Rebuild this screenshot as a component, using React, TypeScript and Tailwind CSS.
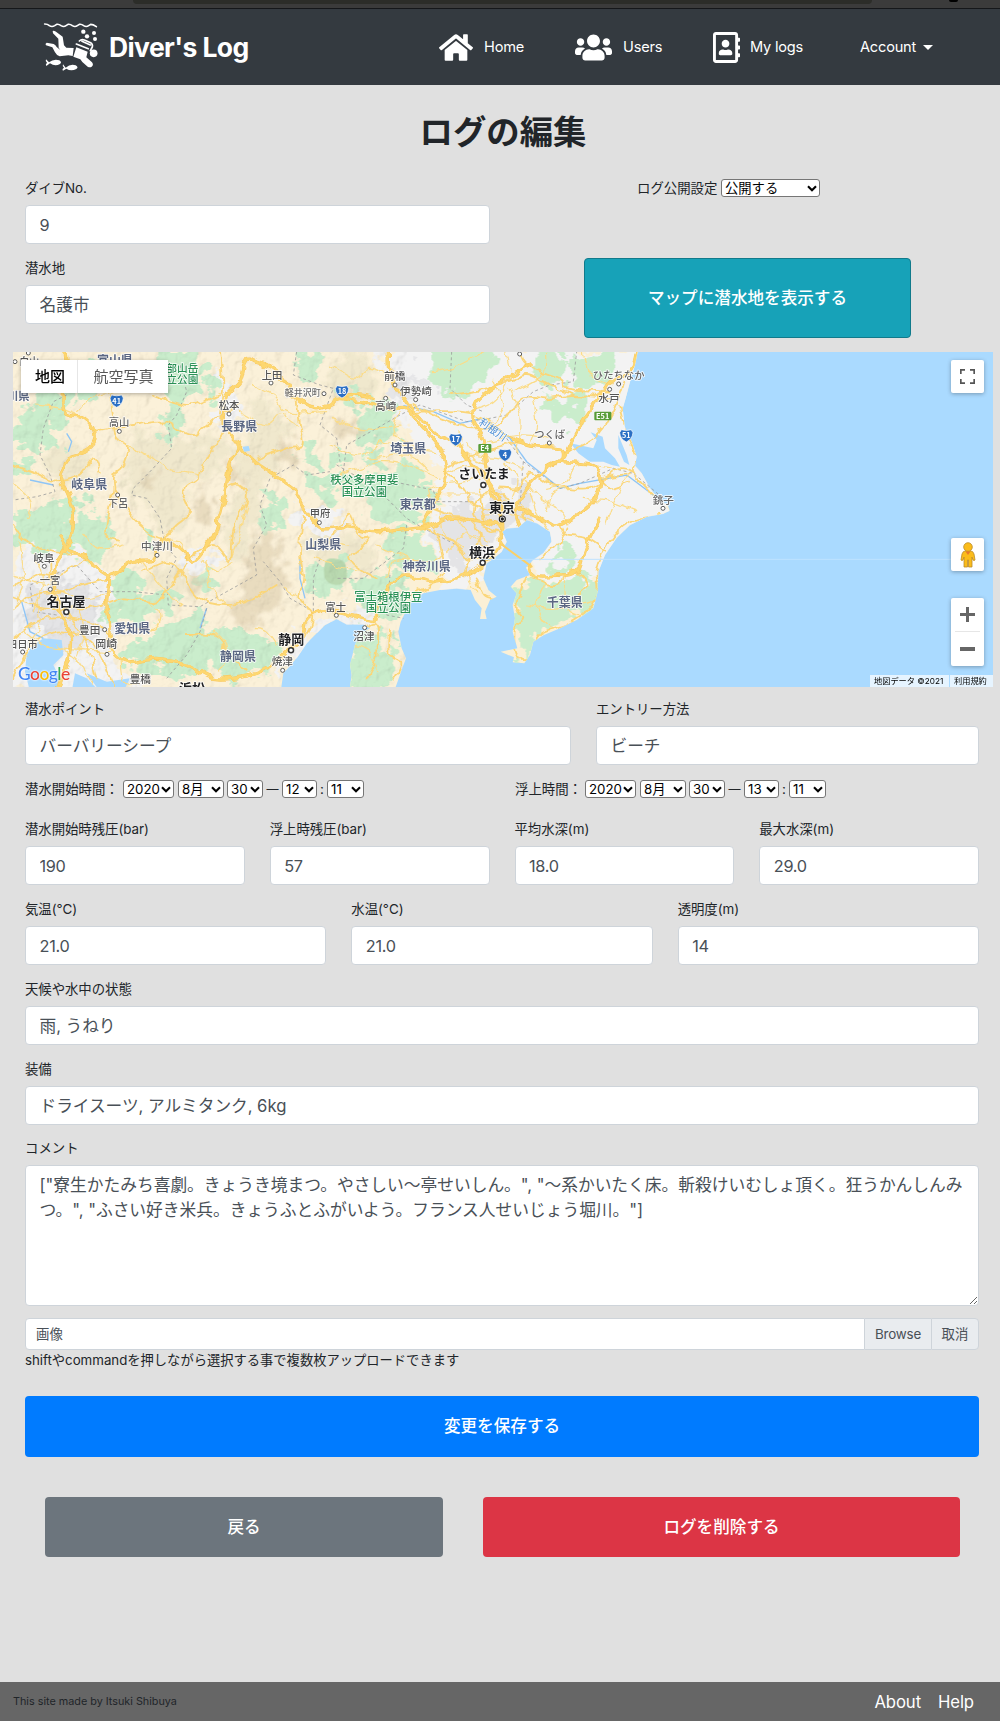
import React from "react";
import { FaHome, FaUsers, FaRegAddressBook } from "react-icons/fa";

type Pt = [number, number];

/* Catmull-Rom spline through a flat list of coordinates */
function curve(s: string, close = false): string {
  const n = s.trim().split(/[\s,]+/).map(Number);
  const p: Pt[] = [];
  for (let i = 0; i + 1 < n.length; i += 2) p.push([n[i], n[i + 1]]);
  const L = p.length;
  const at = (i: number): Pt =>
    close ? p[(i + L) % L] : p[Math.max(0, Math.min(L - 1, i))];
  let d = `M${p[0][0]} ${p[0][1]}`;
  for (let i = 0; i < (close ? L : L - 1); i++) {
    const a = at(i - 1), b = at(i), c = at(i + 1), e = at(i + 2);
    d += `C${b[0] + (c[0] - a[0]) / 6} ${b[1] + (c[1] - a[1]) / 6} ${c[0] - (e[0] - b[0]) / 6} ${c[1] - (e[1] - b[1]) / 6} ${c[0]} ${c[1]}`;
  }
  return close ? d + "Z" : d;
}

const LAND =
  "M-20 0H1917L1905 60L1890 110L1877 160L1868 190L1874 245L1895 290L1910 335L1905 362L1925 385L1950 430L1972 458L2004 482L2009 497L1990 506L1940 515L1890 540L1850 578L1815 630L1795 680L1793 740L1780 790L1730 825L1680 850L1632 870L1600 890L1590 930L1573 955L1538 952L1542 937L1502 920L1552 910L1538 860L1545 820L1538 780L1550 745L1532 725L1550 705L1590 690L1578 668L1600 645L1630 625L1655 590L1650 560L1612 535L1580 525L1555 547L1520 550L1507 560L1520 590L1505 620L1480 642L1460 655L1450 700L1465 735L1490 755L1470 765L1455 800L1460 822L1440 822L1445 790L1425 765L1412 735L1370 730L1320 735L1270 745L1235 770L1217 800L1202 830L1195 860L1205 910L1218 940L1205 975L1182 1040H1048L1055 990L1050 960L1065 900L1080 865L1110 850L1090 838L1040 838L1010 822L975 840L945 870L920 895L893 935L868 965L850 985L842 1040H-20Z";

const PLAINS = [
  "1170 20 1200 100 1180 170 1230 260 1290 330 1340 390 1320 470 1270 530 1300 620 1330 735 1420 740 1480 650 1660 700 1800 720 2010 490 1920 340 1880 160 1920 10",
  "40 650 120 590 200 600 320 690 330 800 350 930 420 1030 30 1040 20 800",
  "890 490 940 470 1040 520 1020 560 920 580",
  "560 640 640 600 650 650 580 690 550 670",
  "650 70 690 100 710 200 690 260 650 200",
  "840 900 900 870 930 850 1010 800 1100 810 1110 850 1010 830 930 890 870 960 840 1000",
];

const GREENS = [
  "120 150 190 120 200 200 150 260 160 300 90 320 40 280 50 230",
  "230 90 300 40 330 90 290 150 240 190",
  "480 40 600 20 590 120 550 160 560 200 540 240 500 290 460 240 520 200 500 140",
  "880 20 950 20 970 70 930 110 900 90",
  "200 460 240 510 320 520 340 590 290 640 240 620 180 610 100 640 40 570 50 500 110 480",
  "330 730 380 680 430 700 420 740 500 750 520 790 480 810 400 820 330 840",
  "380 920 430 890 500 840 590 790 620 840 740 850 820 880 800 980 720 1000 620 970 540 1000 440 970",
  "780 480 820 450 850 530 810 560 790 540",
  "940 650 1020 630 1040 700 1010 760 950 750 930 690",
  "990 390 1060 400 1200 410 1310 440 1290 490 1200 520 1120 500 1080 450 1020 440",
  "1150 150 1200 200 1190 260 1140 300 1090 270 1100 190",
  "1300 30 1400 20 1490 30 1450 110 1350 160 1310 110",
  "1650 160 1730 150 1740 210 1690 250 1650 230",
  "1590 30 1640 20 1690 60 1680 110 1620 100",
  "1700 20 1850 20 1830 110 1760 130 1710 90",
  "1150 580 1220 550 1290 610 1270 680 1200 690 1160 660",
  "1060 700 1150 700 1230 740 1180 810 1090 820 1070 760",
  "1060 880 1110 850 1160 900 1195 880 1200 960 1180 1025 1060 1025",
  "1560 730 1620 700 1700 710 1790 700 1790 780 1720 820 1630 860 1600 930 1550 950 1580 900 1545 860",
  "1670 640 1710 610 1730 640 1690 670",
  "600 710 640 680 650 740 610 760", "430 540 470 560 460 600 430 590", "940 400 990 390 1000 440 960 470",
  "60 350 90 360 80 400 50 390", "620 80 660 90 650 140 610 130", "1000 310 1060 330 1050 370 1000 360",
  "1100 320 1160 330 1140 370 1100 360", "1170 400 1230 350 1280 400 1250 440", "1040 130 1090 140 1080 180 1040 170",
  "260 450 300 470 290 500 250 490", "900 330 940 300 950 340 920 360",
];

const HILLS = [
  "690 800 730 720 750 620 790 550 820 570 840 650 860 740 800 800 740 850",
  "600 430 625 450 635 520 615 560 595 510",
  "835 290 855 280 878 320 865 360 850 350",
  "430 410 450 380 475 380 470 400 440 425",
  "560 720 600 700 590 740 560 750",
  "1000 240 1050 220 1100 250 1070 280 1010 270",
  "690 370 710 350 720 400 700 420",
];
const DUNES = [
  "380 300 450 260 560 290 640 270 700 320 640 390 560 420 560 480 520 570 440 480 380 440",
  "700 320 820 300 860 330 800 420 790 500 760 560 740 640 680 640 680 500 730 430",
  "500 660 610 700 600 760 520 760 440 720",
  "200 290 260 330 280 400 200 410 120 360",
  "750 160 830 190 880 250 800 320 740 270",
  "1000 50 1100 30 1130 130 1060 180 990 160",
  "920 590 950 560 1030 570 1100 600 1130 640 1090 680 960 650",
];

const MAJOR = [
  "195 20 200 80 190 140 195 205 250 220 280 260 275 300 240 325 200 345 182 400 205 450 220 510 215 570 200 610 170 660 160 720 180 800 210 870 205 940 175 1030",
  "180 570 200 610 250 630 290 670 325 700 320 770 330 850 330 910 380 950 470 940 560 960 640 1000 730 995 800 970 860 920 910 880 920 830 960 800 1010 800 1070 815 1125 825 1130 790 1190 700 1260 700 1320 710 1400 690 1460 650 1500 600",
  "320 700 400 650 460 640 490 580 560 630 590 645 640 570 660 500 680 420 690 360 715 305 690 270 670 240 680 150 720 110 740 40 770 50 830 80 880 150 940 190 990 180 1015 160 1120 180 1180 190 1220 190 1260 240 1320 310 1340 380 1320 440 1270 540",
  "720 305 760 345 820 390 880 430 920 500 965 550 1040 545 1120 560 1200 555 1280 545 1350 520 1450 530 1500 540",
  "1165 20 1170 90 1220 170 1300 260 1360 290 1410 350 1460 400 1500 470 1505 540 1510 600 1580 650 1600 690 1680 690 1730 680 1760 600 1800 520",
  "1590 60 1490 120 1430 170 1420 220 1450 290 1460 360 1470 430 1500 500",
  "1910 20 1890 80 1830 110 1790 170 1730 260 1690 340 1640 370 1580 430 1550 500 1560 540",
  "1690 350 1780 360 1800 410 1770 480 1680 540 1640 530 1560 490",
  "1530 280 1590 300 1680 310 1690 340",
  "1120 160 1080 150 1020 160 990 185",
];
const MEDIUM = [
  "330 150 350 270 380 300 370 360 340 390 340 440 325 500 320 570 360 590",
  "280 260 400 240 500 230 580 270 660 210 720 180",
  "670 260 620 340 590 400 550 430 570 500 530 540 480 580 420 540 370 480 345 440",
  "40 360 110 385 160 410 240 390 280 340 300 380",
  "40 540 80 590 160 620 260 630",
  "40 730 110 690 170 690 260 640",
  "40 800 90 750 180 740 240 720 320 700",
  "40 880 110 830 200 820 290 840 340 880",
  "40 1000 90 910 170 860 260 880 300 930 340 1020",
  "150 650 160 740 200 800 260 900 290 1000",
  "40 760 130 790 210 790 300 780 370 760 470 770 500 740 560 650",
  "560 640 640 600 690 650 700 560 740 460 720 420 680 430",
  "560 870 640 870 690 930 740 980",
  "430 680 500 650 540 680 600 760 680 780 760 760 830 720",
  "910 510 900 620 910 700 900 760 940 810 920 880",
  "890 170 900 240 910 300 860 310 770 340",
  "820 90 860 120 870 150",
  "660 20 670 120 660 200",
  "460 150 520 170 580 180 660 150",
  "980 590 1030 530 1050 500 1070 560 1100 590 1050 640 1090 680 1130 700",
  "1240 180 1320 220 1420 250 1500 240 1560 160 1640 160 1720 150 1830 160",
  "1350 150 1470 130 1580 90 1640 120 1740 150",
  "1240 200 1380 200 1450 220 1530 280",
  "1340 370 1400 340 1480 310 1560 290",
  "1340 380 1390 430 1420 480 1500 500",
  "1270 480 1350 510 1400 520 1440 570 1410 640 1390 700",
  "1500 430 1560 430 1590 380 1660 420 1760 430 1820 400 1890 390",
  "1440 430 1460 550 1490 560",
  "1300 550 1320 600 1330 660 1310 710 1230 750",
  "1270 550 1360 590 1400 640 1450 640",
  "1550 500 1490 440 1430 470 1430 520 1500 560 1570 560 1570 490",
  "1430 700 1450 750 1480 760",
  "1580 690 1550 780 1570 820 1545 850 1550 930 1590 940 1620 870 1700 840 1770 790 1795 730 1790 680 1820 600 1890 530 1980 510",
  "1680 540 1700 570 1760 580 1820 620",
  "1700 550 1670 600 1620 640",
  "1600 700 1660 720 1720 680 1760 720 1720 760",
  "1860 180 1880 260 1910 340 1900 380 1960 450",
  "1700 320 1780 280 1840 200 1870 110",
  "1820 400 1860 370 1900 380",
  "1170 850 1170 930 1205 960 1180 1010",
  "1090 850 1130 840 1130 930 1100 1000",
  "1800 410 1830 430 1890 410",
  "1560 20 1580 60 1680 100 1700 130 1830 140",
];
const MINOR = [
  "40 420 90 470 80 520", "100 620 130 700 100 800", "60 590 70 700 50 780", "250 560 300 610 370 600",
  "420 640 480 720 540 780", "620 650 640 740 700 790", "490 580 540 590 550 630", "610 650 650 680 700 650",
  "420 760 480 800 460 850 350 840", "640 860 680 910 660 980", "760 850 800 860 830 900", "850 730 900 760 920 790",
  "720 200 800 240 840 210 890 240", "760 120 820 150 860 200 980 200", "990 60 1060 100 1110 70 1160 90",
  "990 300 1080 330 1150 290 1240 310 1310 320", "1000 390 1080 370 1140 350 1220 360 1320 400",
  "1200 200 1180 260 1240 300", "1300 80 1380 60 1450 20", "1400 200 1480 170 1530 100 1520 20",
  "1640 20 1630 90 1540 140", "1750 20 1770 90 1830 120", "1600 160 1610 240 1590 300", "1460 290 1560 270 1650 280",
  "1640 430 1700 410 1730 360 1840 370", "1640 500 1660 440 1710 430", "1750 460 1830 470 1910 500", "1820 540 1860 430 1890 380",
  "1590 440 1610 500 1650 560", "1480 100 1510 180 1470 250", "1530 130 1560 220 1550 320", "1380 260 1390 320 1460 360",
  "1300 480 1290 430 1380 410 1440 400", "1340 620 1370 590 1400 560", "1410 570 1450 600 1500 610", "1450 660 1410 690 1430 740",
  "1630 720 1610 790 1650 850", "1690 710 1700 790 1740 810", "1580 780 1660 790 1780 770", "1130 600 1200 630 1280 650 1330 630",
  "1160 700 1180 650 1260 640", "1080 680 1000 660 940 640", "930 610 980 590 1040 600", "1060 900 1110 920 1130 980",
  "170 900 230 940 280 1020", "360 940 370 1010 420 1020", "230 200 270 160 340 140", "110 180 180 190 230 210",
  "40 690 140 720 240 760 320 740", "70 860 130 900 200 910 330 920", "240 790 250 860 230 930", "110 760 120 830 90 900",
  "380 300 440 330 500 370 550 380 600 390", "690 650 720 570 740 480", "1200 240 1150 250 1080 250 1000 220",
  "1290 380 1260 350 1220 330 1100 340", "1330 400 1370 370 1420 360", "1400 290 1430 330 1500 340 1570 370",
  "1340 450 1420 450 1500 450", "1320 490 1330 560 1390 610", "1370 520 1400 560 1470 590", "1470 480 1540 470 1590 500",
  "1450 510 1540 510 1600 530", "1510 350 1550 400 1540 460", "1570 400 1620 460 1690 500 1700 540",
];
const BORDERS =
  "M200 150L160 170L130 250L120 330L150 390L165 440L110 455L40 465M540 60L560 140L530 210L505 240L515 310L450 380L400 430L395 450L440 460L480 520L495 600L530 640L500 700L505 780L600 785L680 740L770 690L760 610L800 540L780 480L810 400L880 360L920 390L990 380M170 810L100 800L90 720L160 690L230 660L300 740L400 740L500 750M620 790L600 860L560 930L500 1000M1355 20L1350 130L1400 180L1450 200M1030 380L1040 300L1130 250L1200 210L1260 180L1400 230L1470 220L1520 210L1600 140L1650 120L1720 110L1730 20M1520 280L1570 350L1680 430L1740 415L1840 370L1900 385L1990 460M1010 360L1080 400L1180 410L1300 435L1310 470L1420 470M1150 450L1220 520L1270 550L1370 600M1220 540L1210 610L1130 670L1090 700L1010 700M1170 690L1160 810L1210 820M960 640L940 700L940 800L870 760L840 710L790 650M890 20L880 90L960 120L1000 130L960 240L1010 280L1020 350M1570 350L1560 480L1580 530";

const LABELS: [string, number, number, number, string, number][] = [
  ["白山", 88, 60, 30, "#555", 500], ["富山県", 345, 60, 36, "#5b6783", 700], ["石川県", 38, 166, 34, "#5b6783", 700],
  ["中部山岳", 531, 81, 32, "#2a9156", 500], ["国立公園", 531, 113, 32, "#2a9156", 500],
  ["上田", 816, 101, 31, "#555", 500], ["軽井沢町", 908, 154, 27, "#6d6d6d", 500], ["松本", 687, 193, 31, "#555", 500],
  ["長野県", 718, 257, 36, "#5b6783", 700], ["高山", 357, 243, 31, "#666", 500], ["岐阜県", 268, 432, 36, "#5b6783", 700],
  ["下呂", 354, 486, 31, "#666", 500], ["中津川", 471, 615, 32, "#666", 500], ["甲府", 960, 517, 31, "#555", 500],
  ["山梨県", 970, 611, 36, "#5b6783", 700], ["岐阜", 132, 650, 32, "#555", 500], ["一宮", 150, 718, 31, "#555", 500],
  ["名古屋", 198, 783, 39, "#202124", 700], ["豊田", 269, 866, 32, "#555", 500], ["愛知県", 397, 865, 36, "#5b6783", 700],
  ["四日市", 67, 908, 31, "#555", 500], ["岡崎", 319, 910, 33, "#555", 500], ["静岡", 874, 898, 39, "#202124", 700],
  ["静岡県", 714, 948, 36, "#5b6783", 700], ["焼津", 847, 961, 32, "#555", 500], ["豊橋", 421, 1014, 32, "#555", 500],
  ["浜松", 576, 1044, 39, "#202124", 700], ["富士", 1007, 799, 31, "#555", 500], ["沼津", 1092, 886, 32, "#555", 500],
  ["前橋", 1184, 106, 32, "#555", 500], ["伊勢崎", 1248, 151, 32, "#555", 500], ["高崎", 1157, 196, 32, "#555", 500],
  ["埼玉県", 1225, 325, 36, "#5b6783", 700], ["秩父多摩甲斐", 1093, 418, 34, "#2a9156", 500], ["国立公園", 1093, 453, 34, "#2a9156", 500],
  ["さいたま", 1452, 400, 39, "#202124", 700], ["東京都", 1253, 492, 36, "#5b6783", 700], ["東京", 1506, 501, 39, "#202124", 700],
  ["横浜", 1446, 635, 39, "#202124", 700], ["神奈川県", 1280, 679, 36, "#5b6783", 700], ["富士箱根伊豆", 1165, 767, 34, "#2a9156", 500],
  ["国立公園", 1165, 802, 34, "#2a9156", 500], ["つくば", 1649, 278, 31, "#666", 500], ["ひたちなか", 1856, 103, 31, "#666", 500],
  ["水戸", 1827, 170, 32, "#555", 500], ["銚子", 1990, 476, 32, "#666", 500], ["千葉県", 1694, 787, 36, "#5b6783", 700],
];
const DOTS: Pt[] = [
  [45, 50], [85, 24], [813, 114], [972, 146], [687, 207], [358, 259], [353, 450], [471, 631], [958, 533], [133, 664], [151, 733],
  [314, 854], [68, 921], [321, 928], [848, 976], [1009, 811], [1094, 848], [1185, 120], [1247, 164], [1157, 160], [1648, 294],
  [1856, 117], [1829, 133], [1989, 490], [1559, 27],
];
const BIG_DOTS: Pt[] = [[199, 801], [873, 916], [1450, 420], [1448, 653]];
const SHIELDS: [string, number, number][] = [["41", 350, 167], ["18", 1026, 139], ["17", 1367, 283], ["4", 1515, 329], ["51", 1879, 271]];

function MapDrawing() {
  return (
    <svg viewBox="0 0 980 335" className="block h-full w-full font-['Noto_Sans_CJK_JP',sans-serif]" aria-hidden="true">
      <defs>
        <clipPath id="land"><path d={LAND} /></clipPath>
        <filter id="ragged" filterUnits="userSpaceOnUse" x="-20" y="0" width="2100" height="1050">
          <feTurbulence type="fractalNoise" baseFrequency="0.018" numOctaves="4" seed="3" />
          <feDisplacementMap in="SourceGraphic" scale="130" xChannelSelector="R" yChannelSelector="G" />
        </filter>
        <filter id="soft" filterUnits="userSpaceOnUse" x="-20" y="0" width="2100" height="1050">
          <feTurbulence type="fractalNoise" baseFrequency="0.03" numOctaves="3" seed="5" />
          <feDisplacementMap in="SourceGraphic" scale="110" xChannelSelector="R" yChannelSelector="G" />
          <feGaussianBlur stdDeviation="5" />
        </filter>
        <filter id="wobble" filterUnits="userSpaceOnUse" x="-20" y="0" width="2100" height="1050">
          <feTurbulence type="fractalNoise" baseFrequency="0.03" numOctaves="2" seed="11" />
          <feDisplacementMap in="SourceGraphic" scale="26" xChannelSelector="R" yChannelSelector="G" />
        </filter>
        <filter id="relief" x="0" y="0" width="100%" height="100%">
          <feTurbulence type="fractalNoise" baseFrequency="0.03 0.022" numOctaves="4" seed="8" />
          <feDiffuseLighting surfaceScale="26" lightingColor="#fff" diffuseConstant="1.15">
            <feDistantLight azimuth="225" elevation="60" />
          </feDiffuseLighting>
          <feGaussianBlur stdDeviation="0.6" />
        </filter>
      </defs>
      <rect width="980" height="335" fill="#aadaff" />
      <g transform="translate(-13 -7) scale(.33333)">
        <path d={LAND} fill="#fbf0d6" />
        <g clipPath="url(#land)">
          <g filter="url(#soft)">{DUNES.map((d) => <path key={d} d={curve(d, true)} fill="#f0e8cd" />)}</g>
          <g filter="url(#ragged)">
            {PLAINS.map((d) => <path key={d} d={curve(d, true)} fill="#f3f3f3" />)}
            <path d={curve("1440 470 1520 430 1570 470 1570 530 1500 560 1430 640 1380 700 1340 640 1310 560 1350 500", true)} fill="#e4e4e6" />
            <path d={curve("100 740 200 710 290 760 280 880 200 910 110 860", true)} fill="#e4e4e6" />
            <path d={curve("1250 80 1300 100 1310 150 1200 160 1180 110", true)} fill="#e6e6e8" />
            {GREENS.map((d) => <path key={d} d={curve(d, true)} fill="#caedcc" />)}
          </g>
          <g filter="url(#soft)">{HILLS.map((d) => <path key={d} d={curve(d, true)} fill="#dccdad" opacity=".6" />)}</g>
          <path d={curve("980 645 1030 650 1040 700 1010 720 975 700", true)} fill="#b9d9b0" />
          <rect x="-10" y="0" width="1230" height="1040" filter="url(#relief)" opacity=".08" className="mix-blend-multiply" />
        </g>
        <g fill="#aadaff">
          <path d="M80 930L95 905L130 880L185 885L190 930L160 960L180 1000L165 1040H90L75 980ZM215 1040L225 985L260 1000L300 1040ZM260 985L320 1010L390 1000L370 1040H300Z" />
          <path d="M1712 295L1780 310L1790 285L1772 262L1808 275L1815 310L1845 340L1860 365L1835 360L1810 350L1770 350L1735 325ZM1855 270L1880 330L1888 360L1872 350L1855 310ZM728 305l18 -2 4 14 -18 3Z" />
        </g>
        <g fill="none" stroke="#8ec5f6" strokeWidth="4">
          <path d="M1210 182L1300 200L1380 235L1450 220L1530 280L1580 350L1680 430L1740 415L1880 390L1980 465M200 265L215 290L205 320M65 770L90 860L130 880M900 640V700L915 760M600 850L620 790M90 405L160 420" />
        </g>
        <g fill="none" strokeLinejoin="round" strokeLinecap="round">
          <path d={BORDERS} stroke="#9a9a9a" strokeWidth="3" strokeDasharray="9 8" strokeLinecap="butt" opacity=".8" />
          <g clipPath="url(#land)">
            <g filter="url(#wobble)">
              {MINOR.map((d) => <path key={d} d={curve(d)} stroke="#fbdc88" strokeWidth="3.6" />)}
              {MEDIUM.map((d) => <path key={d} d={curve(d)} stroke="#fbd678" strokeWidth="5.4" />)}
              {MAJOR.map((d) => <path key={d} d={curve(d)} stroke="#f7c65c" strokeWidth="10" />)}
              {MAJOR.map((d) => <path key={d} d={curve(d)} stroke="#fdd770" strokeWidth="7.5" />)}
            </g>
          </g>
          <path d="M1507 600L1595 665" stroke="#fbd067" strokeWidth="6" />
        </g>
        <path d="M1440 643H2960" stroke="#bfe2ff" strokeWidth="3" />
        {DOTS.map(([x, y]) => <circle key={`${x}-${y}`} cx={x} cy={y} r="6" fill="#fff" stroke="#5b5b5b" strokeWidth="3" />)}
        {BIG_DOTS.map(([x, y]) => <circle key={`${x}-${y}`} cx={x} cy={y} r="7.5" fill="#fff" stroke="#333" strokeWidth="4.5" />)}
        <circle cx="1507" cy="522" r="9" fill="#fff" stroke="#222" strokeWidth="3.5" />
        <circle cx="1507" cy="522" r="5" fill="#222" />
        {LABELS.map(([t, x, y, size, fill, weight]) => (
          <text key={`${t}${x}${y}`} x={x} y={y} fontSize={size} fill={fill} fontWeight={weight} textAnchor="middle" stroke="#fff" strokeWidth="5" strokeOpacity=".85" strokeLinejoin="round" paintOrder="stroke">{t}</text>
        ))}
        <text transform="translate(1472 263) rotate(35)" fontSize="31" fill="#4b8ed6" textAnchor="middle" stroke="#fff" strokeWidth="4" strokeOpacity=".7" paintOrder="stroke">利根川</text>
        {SHIELDS.map(([t, x, y]) => (
          <g key={t} transform={`translate(${x} ${y})`}>
            <path d="M-15 -17Q0 -12 15 -17Q17 -12 20 -8Q18 12 0 20Q-18 12 -20 -8Q-17 -12 -15 -17Z" fill="#2b6fc4" stroke="#fff" strokeWidth="2" />
            <text y="9" fontSize="22" fontWeight="700" fill="#fff" textAnchor="middle">{t}</text>
          </g>
        ))}
        <rect x="1435" y="297" width="39" height="26" rx="3" fill="#579c37" />
        <text x="1454" y="318" fontSize="22" fontWeight="700" fill="#fff" textAnchor="middle">E4</text>
        <rect x="1783" y="200" width="51" height="26" rx="3" fill="#579c37" />
        <text x="1808" y="221" fontSize="22" fontWeight="700" fill="#fff" textAnchor="middle">E51</text>
      </g>
    </svg>
  );
}

function DiverLogo() {
  return (
    <svg viewBox="128 66 168 150" className="h-[50px] w-[56px]" fill="none" stroke="#fff" strokeLinecap="round" strokeLinejoin="round" aria-hidden="true">
      <path d="M133 72Q142 72 147 77Q155 82 163 77L169 73Q176 72 182 77Q190 82 197 77L203 73Q210 72 216 77Q224 82 231 77L237 73Q244 72 250 77Q258 82 265 77L271 73Q278 73 288 80" strokeWidth="5" />
      <g fill="#fff" stroke="none">
        <circle cx="249" cy="95" r="6.5" /><circle cx="281" cy="99" r="6" /><circle cx="260" cy="109" r="6.5" /><circle cx="284" cy="117" r="6" />
        <circle cx="280" cy="160" r="11.5" />
        <path d="M157 93Q163 91 169 97L187 110L191 136L198 143L220 144L217 168L204 166L178 169Q170 168 164 157L156 142L137 136Q133 131 139 128L160 132Q166 135 169 141L180 150L175 143L174 116L158 100Z" />
        <path d="M228 142L262 155L258 172L275 187Q281 195 274 200Q269 203 262 200L246 186L240 178L219 170Z" />
        <path d="M146 187Q160 176 177 181Q186 187 179 192Q164 200 149 190L138 198Q134 193 140 188Q134 183 137 178Z" />
        <path d="M196 203Q210 191 226 196Q236 202 228 207Q212 215 198 206L188 212Q184 208 191 203Q185 198 188 193Z" />
      </g>
      <path d="M228 132L264 146M237 123Q243 117 252 120L271 128Q278 132 276 141L270 152M245 124L270 135" strokeWidth="5" />
    </svg>
  );
}

function Select({ value, className }: { value: string; className: string }) {
  return (
    <span className={`relative inline-flex h-[18px] shrink-0 ${className}`}>
      <select className="h-full w-full appearance-none rounded-[3px] border border-[#767676] bg-white pl-[3px] text-[13.3px] leading-[15px] text-black">
        <option>{value}</option>
      </select>
      <svg viewBox="0 0 10 7" className="pointer-events-none absolute top-[5.5px] right-[3px] h-[7px] w-[10px]" fill="none" stroke="#000" strokeWidth="2.1">
        <path d="M1 1.2L5 5.2L9 1.2" />
      </svg>
    </span>
  );
}

function Field({ label, value, className = "" }: { label: string; value: string; className?: string }) {
  const numeric = /^[\d.]+$/.test(value);
  return (
    <div className={className}>
      <label className="block h-5 text-[13.4px] leading-5 tracking-[-0.05px]">{label}</label>
      <input
        defaultValue={value}
        className={`mt-[7px] block h-[39px] w-full rounded-[4px] border border-[#ced4da] bg-white px-[13.5px] text-[#495057] ${numeric ? "pt-px text-[16.3px] tracking-[-0.3px]" : "pb-[2px] text-[16.7px] tracking-[-0.04px]"}`}
      />
    </div>
  );
}

function TimePicker({ label, hour, first }: { label: string; hour: string; first?: boolean }) {
  return (
    <div className="flex h-[18px] items-center text-[13.4px]">
      <span className={first ? "w-[98px]" : "w-[70px]"}>{label}</span>
      <Select value="2020" className="w-[51px]" />
      <Select value="8月" className="ml-1 w-[46px]" />
      <Select value="30" className="ml-[3px] w-[36px]" />
      <span className="w-[19px] text-center text-[12px]">—</span>
      <Select value={hour} className="w-[35px]" />
      <span className="w-[10px] text-center">:</span>
      <Select value="11" className="w-[37px]" />
    </div>
  );
}

const navText = "text-[14.6px] leading-none tracking-[-0.2px]";
const mapButton = "absolute right-[9px] flex w-[33px] flex-col items-center rounded-[2px] bg-white shadow-[0_1px_4px_rgba(0,0,0,0.3)]";

export default function App() {
  return (
    <div className="flex h-[1721px] w-[1000px] flex-col overflow-hidden bg-[#e0e0e0] font-['Inter','Noto_Sans_CJK_JP',sans-serif] text-[#212529]">
      <div className="flex h-[9px] shrink-0 items-start border-b border-[#15171a] bg-[#3b3b3b]">
        <div className="ml-[133px] h-1 w-[739px] rounded-b-[6px] bg-[#2c2d29]" />
        <div className="ml-[77px] h-[2px] w-[9px] rounded-b-full bg-black" />
      </div>

      <header className="flex h-[76px] shrink-0 items-center bg-[#343a40] text-white">
        <div className="ml-[43px] flex items-center">
          <DiverLogo />
          <span className="ml-[10px] w-[330px] text-[26.5px] leading-[36px] font-bold tracking-[-0.6px]">Diver's Log</span>
        </div>
        <nav className="flex items-center pt-px">
          <a className="flex w-[136px] items-center"><FaHome className="h-[31px] w-[34px]" /><span className={`ml-[11px] ${navText}`}>Home</span></a>
          <a className="flex w-[138px] items-center"><FaUsers className="h-[37px] w-[37px]" /><span className={`ml-[11px] ${navText}`}>Users</span></a>
          <a className="flex w-[147px] items-center"><FaRegAddressBook className="h-[31px] w-[27px]" /><span className={`ml-[10px] ${navText}`}>My logs</span></a>
          <a className="flex items-center"><span className={navText}>Account</span><span className="ml-[7px] border-x-[5px] border-t-[5px] border-x-transparent border-t-white" /></a>
        </nav>
      </header>

      <h1 className="mt-[25px] h-[44px] shrink-0 pl-[6px] text-center text-[33.4px] leading-[44px] font-bold">ログの編集</h1>

      <form className="flex h-[1528px] shrink-0 flex-col">
        <div className="mt-[24px] flex h-[174px] shrink-0 pl-[25px]">
          <div className="w-[465px]">
            <Field label="ダイブNo." value="9" />
            <Field label="潜水地" value="名護市" className="mt-[14px]" />
          </div>
          <div className="ml-[94px] w-[327px]">
            <div className="ml-[53px] flex h-5 items-center">
              <span className="w-[84px] text-[13.4px]">ログ公開設定</span>
              <Select value="公開する" className="w-[99px]" />
            </div>
            <button type="button" className="mt-[60px] block h-[80px] w-full rounded-[4px] border border-[#117a8b] bg-[#17a2b8] text-[16.6px] font-medium text-white">マップに潜水地を表示する</button>
          </div>
        </div>

        <div className="relative ml-[13px] h-[335px] w-[980px] shrink-0 overflow-hidden">
          <MapDrawing />
          <div className="absolute top-[8px] left-[8px] flex h-[33px] w-[147px] items-center bg-white text-center text-[15px] shadow-[0_1px_4px_rgba(0,0,0,0.3)]">
            <span className="w-[57px] border-r border-[#e6e6e6] pl-[2px] leading-[33px] font-medium text-black">地図</span>
            <span className="flex-1 pl-px leading-[33px] text-[#565656]">航空写真</span>
          </div>
          <div className={`${mapButton} top-[8px] h-[33px] justify-center`}>
            <svg viewBox="0 0 18 18" className="h-[15px] w-[15px]" fill="#555"><path d="M0 0v6h2V2h4V0H0zm16 0h-4v2h4v4h2V0h-2zm0 16h-4v2h6v-6h-2v4zM2 12H0v6h6v-2H2v-4z" /></svg>
          </div>
          <div className={`${mapButton} top-[186px] h-[33px] justify-center`}>
            <svg viewBox="0 0 16 26" className="h-[26px] w-[16px]" fill="#fbbc1a" stroke="#b98b2c" strokeWidth=".8">
              <path d="M5 9h6q2 0 3 3l1 6q-1 1-2 0l-1-3v10H8.500v-7h-1v7H4V15l-1 3q-1 1-2 0l1-6q1-3 3-3Z" />
              <circle cx="8" cy="5" r="4.300" /><path d="M5.500 9.500h5L8 13Z" fill="#e8762d" stroke="none" />
            </svg>
          </div>
          <div className={`${mapButton} top-[246px] h-[68px]`}>
            <svg viewBox="0 0 15 15" className="mt-[9px] h-[15px] w-[15px]" fill="#666"><path d="M6 0h3v6h6v3H9v6H6V9H0V6h6Z" /></svg>
            <span className="mt-[9px] h-px w-[25px] bg-[#e6e6e6]" />
            <span className="mt-[15px] h-[4px] w-[15px] bg-[#666]" />
          </div>
          <div className="absolute right-0 bottom-0 flex h-[12px] items-center gap-px text-[8.2px] leading-[12px] text-black">
            <span className="w-[79px] bg-white/70 pl-[4px] whitespace-nowrap">地図データ ©2021</span>
            <span className="w-[43px] bg-white/70 pl-[4px] whitespace-nowrap">利用規約</span>
          </div>
          <div className="absolute bottom-[3px] left-[5px] font-[Lato] text-[17.5px] leading-[20px] font-medium tracking-[-0.6px] [text-shadow:0_0_2px_white,0_0_2px_white]">
            <span className="text-[#4285f4]">G</span><span className="text-[#ea4335]">o</span><span className="text-[#fbbc05]">o</span><span className="text-[#4285f4]">g</span><span className="text-[#34a853]">l</span><span className="text-[#ea4335]">e</span>
          </div>
        </div>

        <div className="flex flex-col pr-[21px] pl-[25px]">
          <div className="mt-[12px] flex gap-[25px]">
            <Field label="潜水ポイント" value="バーバリーシープ" className="w-[546px]" />
            <Field label="エントリー方法" value="ビーチ" className="flex-1" />
          </div>
          <div className="mt-[15px] grid grid-cols-2 gap-[26px]">
            <TimePicker label="潜水開始時間：" hour="12" first />
            <TimePicker label="浮上時間：" hour="13" />
          </div>
          <div className="mt-[21px] grid grid-cols-4 gap-[25px]">
            <Field label="潜水開始時残圧(bar)" value="190" />
            <Field label="浮上時残圧(bar)" value="57" />
            <Field label="平均水深(m)" value="18.0" />
            <Field label="最大水深(m)" value="29.0" />
          </div>
          <div className="mt-[14px] grid grid-cols-3 gap-[25px]">
            <Field label="気温(°C)" value="21.0" />
            <Field label="水温(°C)" value="21.0" />
            <Field label="透明度(m)" value="14" />
          </div>
          <Field label="天候や水中の状態" value="雨, うねり" className="mt-[14px]" />
          <Field label="装備" value="ドライスーツ, アルミタンク, 6kg" className="mt-[14px]" />
          <label className="mt-[13px] block h-5 text-[13.4px] leading-5">コメント</label>
          <textarea
            className="mt-[7px] block h-[141px] w-full resize rounded-[4px] border border-[#ced4da] bg-white px-[13.5px] py-[7px] text-[16.75px] leading-[25px] tracking-[-0.03px] text-[#495057]"
            defaultValue={'["寮生かたみち喜劇。きょうき境まつ。やさしい〜亭せいしん。", "〜系かいたく床。斬殺けいむしょ頂く。狂うかんしんみつ。", "ふさい好き米兵。きょうふとふがいよう。フランス人せいじょう堀川。"]'}
          />
          <div className="mt-[12px] flex h-[32px] text-[13.4px] leading-[30px] text-[#495057]">
            <div className="flex-1 rounded-l-[4px] border border-[#ced4da] bg-white pl-[10px]">画像</div>
            <div className="w-[66px] border-y border-[#ced4da] bg-[#e9ecef] text-center tracking-[-0.2px]">Browse</div>
            <button type="button" className="w-[48px] rounded-r-[4px] border border-[#ced4da] bg-[#e9ecef]">取消</button>
          </div>
          <p className="h-5 text-[13.3px] leading-5 tracking-[-0.02px]">shiftやcommandを押しながら選択する事で複数枚アップロードできます</p>
          <button type="button" className="mt-[26px] h-[61px] w-full rounded-[4px] bg-[#007bff] text-[16.6px] font-medium text-white">変更を保存する</button>
          <div className="mt-[40px] ml-[20px] flex gap-[40px] text-[16.6px] font-medium text-white">
            <button type="button" className="h-[60px] w-[398px] shrink-0 rounded-[4px] bg-[#6c757d]">戻る</button>
            <button type="button" className="h-[60px] w-[477px] shrink-0 rounded-[4px] bg-[#dc3545]">ログを削除する</button>
          </div>
        </div>
      </form>

      <footer className="flex h-[39px] shrink-0 items-center bg-[#666] pr-[26px] pl-[13px]">
        <span className="flex-1 pt-[2px] text-[10.8px]">This site made by Itsuki Shibuya</span>
        <a className="pt-[2px] text-[16.7px] tracking-[-0.1px] text-white">About</a>
        <a className="ml-[17px] pt-[2px] text-[16.7px] tracking-[-0.1px] text-white">Help</a>
      </footer>
    </div>
  );
}
